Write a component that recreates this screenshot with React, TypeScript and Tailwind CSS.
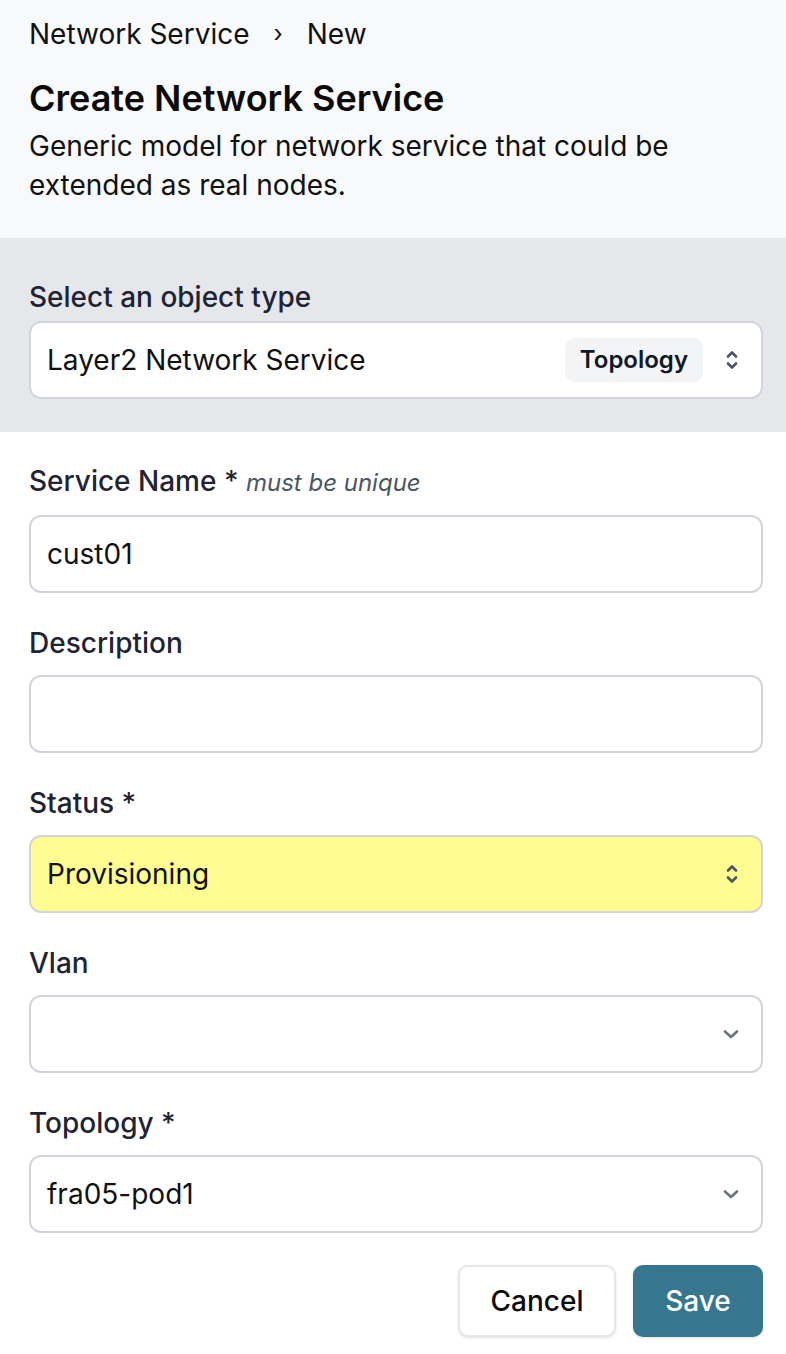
import React from "react";

const font = { fontFamily: "Inter, 'Noto Sans', sans-serif" };

function UpDown() {
  return (
    <svg width="18" height="26" viewBox="0 0 18 26" fill="none" stroke="#4b5563" strokeWidth="2.6" strokeLinecap="round" strokeLinejoin="round">
      <path d="M5 9.5 9 5.5l4 4" />
      <path d="M5 16.5 9 20.5l4-4" />
    </svg>
  );
}

function Down() {
  return (
    <svg width="20" height="20" viewBox="0 0 20 20" fill="none" stroke="#6b7280" strokeWidth="2.6" strokeLinecap="round" strokeLinejoin="round">
      <path d="M4 7.5 10 13l6-5.5" />
    </svg>
  );
}

function Field({ label, children }: { label: React.ReactNode; children: React.ReactNode }) {
  return (
    <div className="mb-[32px]">
      <div className="mb-[14px] text-[28px] leading-[36px] font-medium text-[#1f2433]">{label}</div>
      {children}
    </div>
  );
}

function Box({
  children,
  className = "bg-white",
}: {
  children?: React.ReactNode;
  className?: string;
}) {
  return (
    <div
      className={`flex h-[78px] items-center rounded-[12px] border-2 border-[#d1d5db] pl-[16px] pr-[20px] text-[28px] text-[#111111] ${className}`}
    >
      {children}
    </div>
  );
}

export default function App() {
  return (
    <div className="min-h-[1354px] w-[786px] bg-white" style={font}>
      <header className="bg-[#f8f9fb] pl-[29px] pr-[23px] pt-[16px] pb-[33px]">
        <nav className="flex items-center text-[28px] leading-[36px] text-[#111111]">
          <span>Network Service</span>
          <span className="ml-[24px] mr-[24px] text-[24px]">›</span>
          <span>New</span>
        </nav>
        <h1 className="mt-[26px] text-[36px] leading-[40px] font-semibold text-[#0b0b0b]">Create Network Service</h1>
        <p className="mt-[9px] text-[28px] leading-[39px] text-[#111111]">
          Generic model for network service that could be extended as real nodes.
        </p>
      </header>

      <section className="bg-[#e5e7eb] pl-[29px] pr-[23px] pt-[41px] pb-[33px]">
        <div className="mb-[6px] text-[28px] leading-[36px] font-medium text-[#1f2433]">Select an object type</div>
        <Box>
          <span className="flex-1">Layer2 Network Service</span>
          <span className="mr-[20px] rounded-[10px] bg-[#f3f4f6] px-[15px] py-[4px] text-[24px] leading-[36px] font-semibold text-[#111827]">
            Topology
          </span>
          <UpDown />
        </Box>
      </section>

      <main className="pl-[29px] pr-[23px] pt-[31px]">
        <Field
          label={
            <>
              Service Name *{" "}
              <span className="text-[24px] font-normal italic text-[#4b5563]">must be unique</span>
            </>
          }
        >
          <Box>cust01</Box>
        </Field>
        <Field label="Description">
          <Box />
        </Field>
        <Field label="Status *">
          <Box className="bg-[#fffd92]">
            <span className="flex-1">Provisioning</span>
            <UpDown />
          </Box>
        </Field>
        <Field label="Vlan">
          <Box>
            <span className="flex-1" />
            <Down />
          </Box>
        </Field>
        <Field label="Topology *">
          <Box>
            <span className="flex-1">fra05-pod1</span>
            <Down />
          </Box>
        </Field>
        <div className="mt-[1px] flex justify-end gap-[17px]">
          <button className="h-[72px] w-[158px] rounded-[10px] border-2 border-[#e5e7eb] bg-white text-[28px] font-medium text-[#0b0b0b] shadow-sm">
            Cancel
          </button>
          <button className="h-[72px] w-[130px] rounded-[10px] bg-[#36778f] text-[28px] font-medium text-white shadow-sm">
            Save
          </button>
        </div>
      </main>
    </div>
  );
}
